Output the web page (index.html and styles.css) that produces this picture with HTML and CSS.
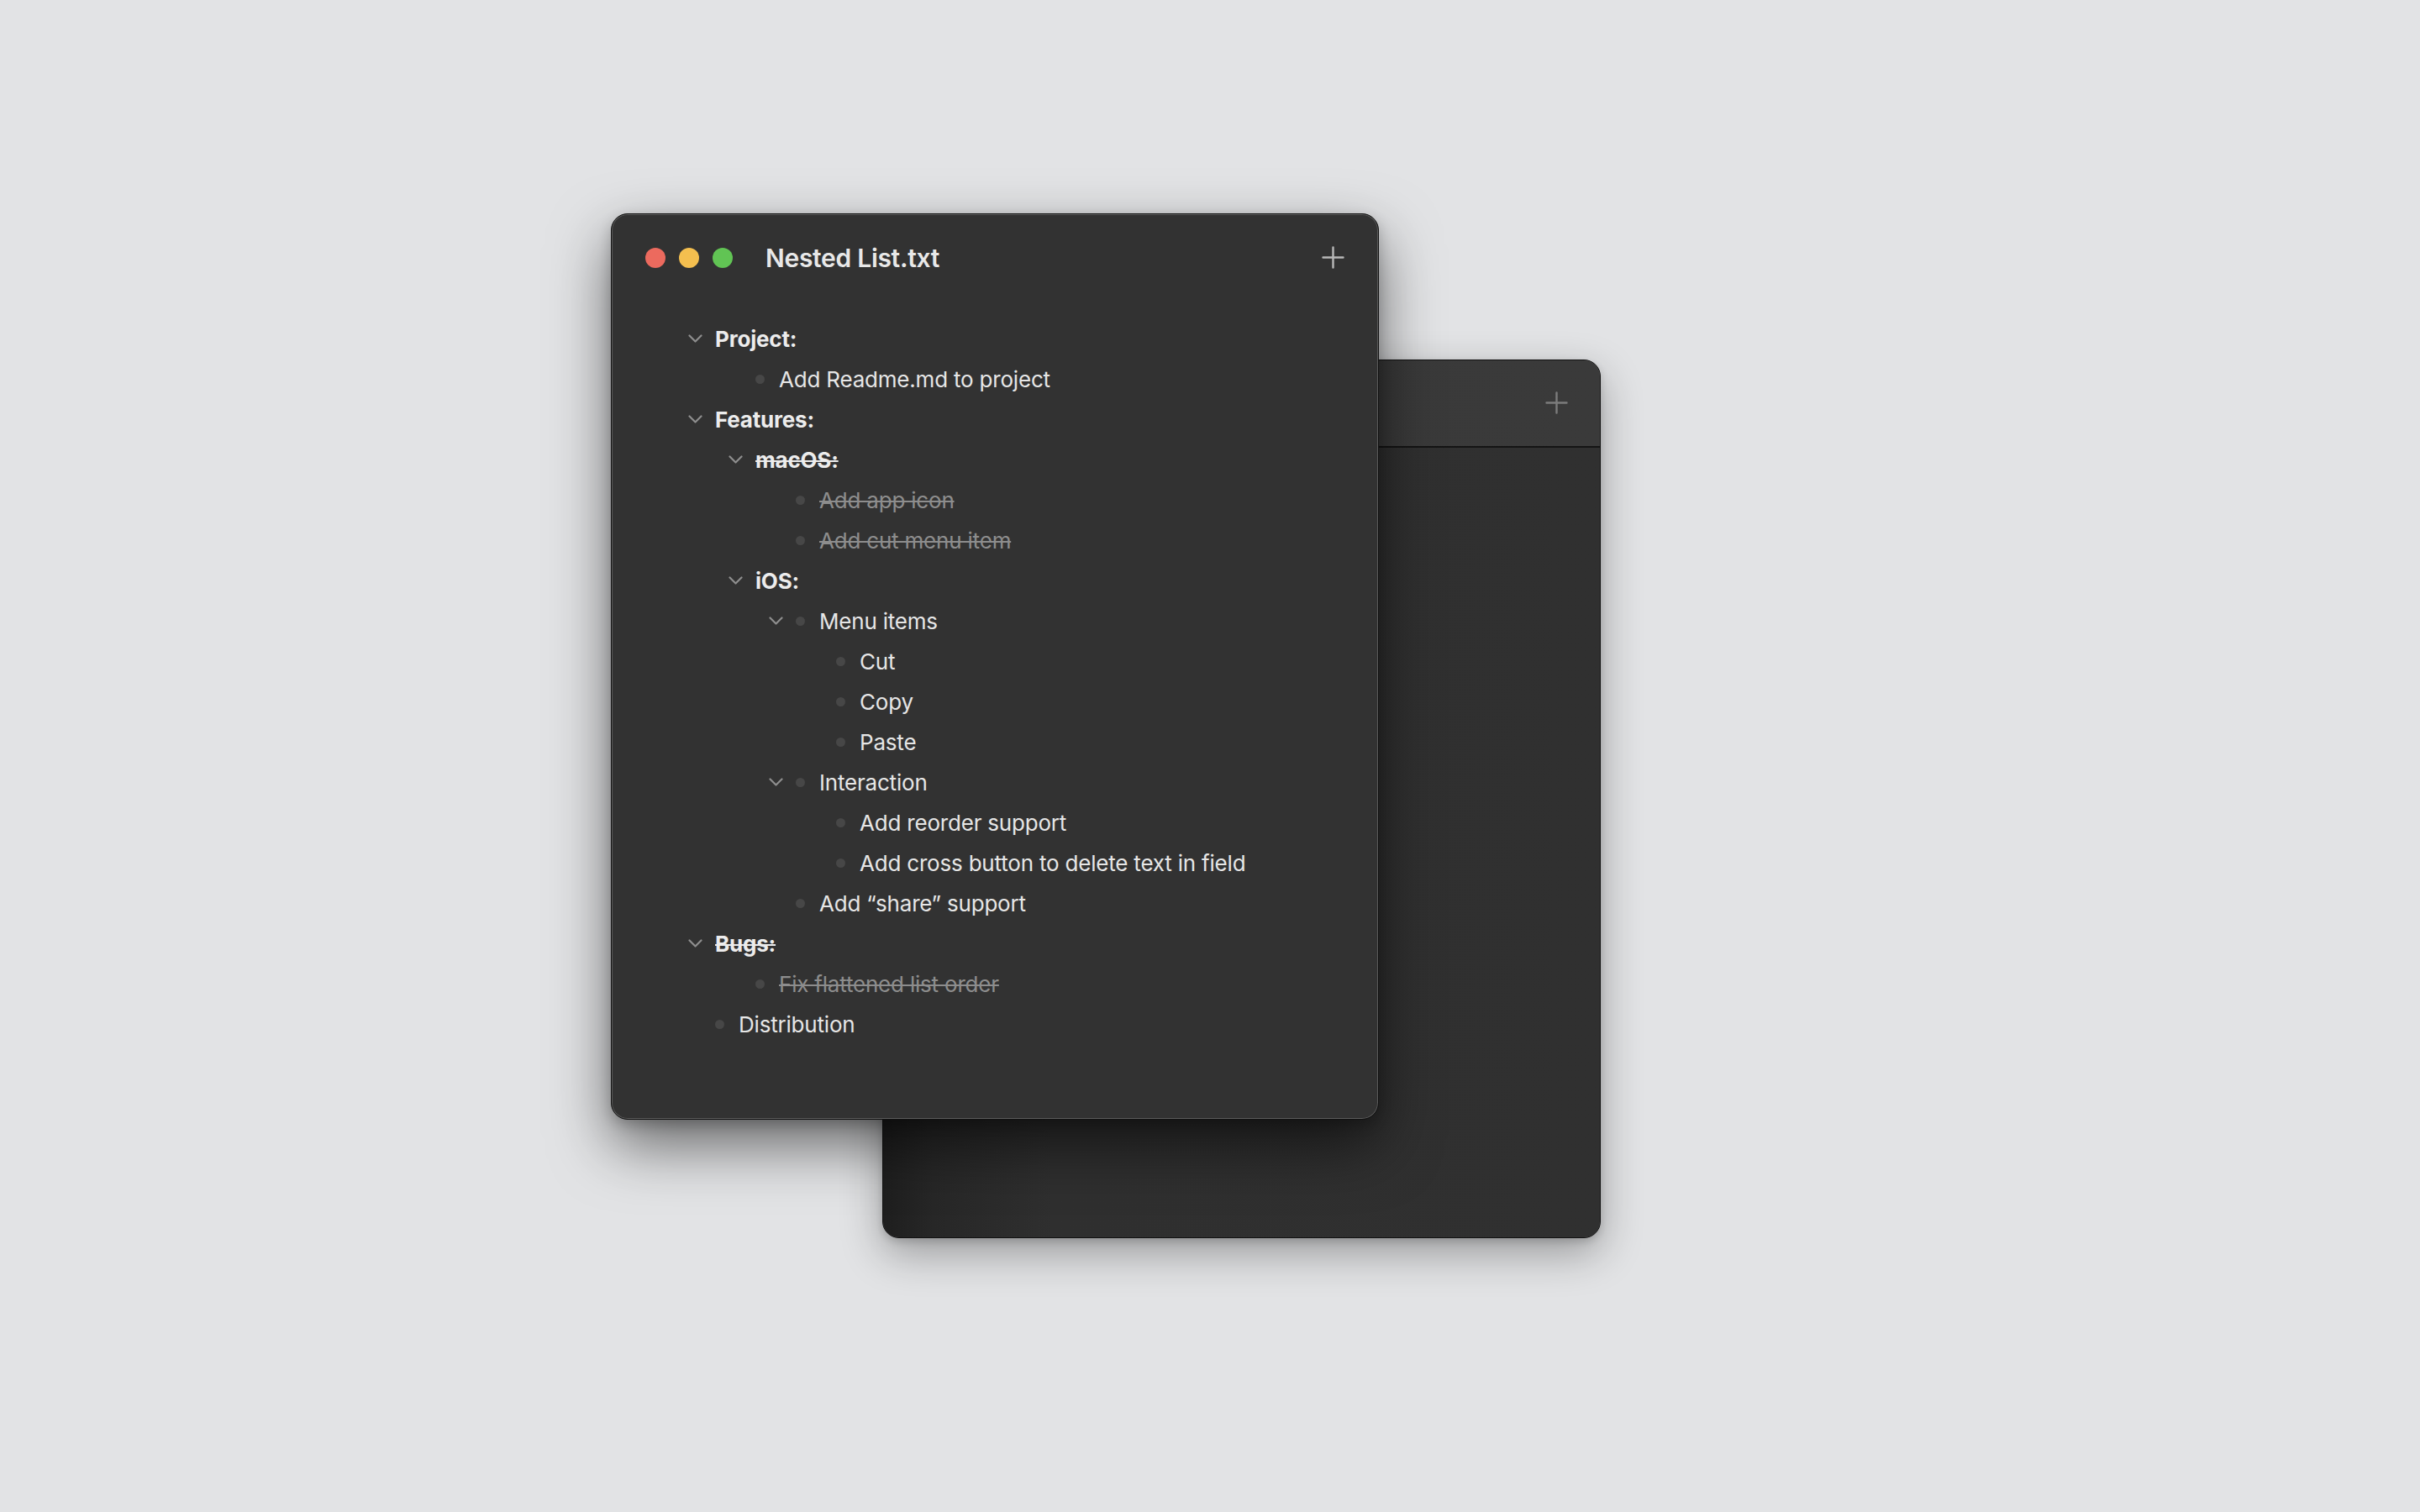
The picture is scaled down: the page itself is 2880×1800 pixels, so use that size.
FILE: index.html
```html
<!DOCTYPE html>
<html lang="en">
<head>
<meta charset="utf-8">
<title>Nested List.txt</title>
<link rel="stylesheet" href="styles.css">
</head>
<body>
<div class="desktop">
  <div class="window back">
    <div class="titlebar back-bar">
      <svg class="plus plus-dim" viewBox="0 0 27 27"><path d="M13.5 1.5v24M1.5 13.5h24"/></svg>
    </div>
    <div class="back-content"></div>
  </div>

  <div class="window front">
    <div class="titlebar">
      <div class="lights">
        <span class="light red"></span>
        <span class="light yellow"></span>
        <span class="light green"></span>
      </div>
      <div class="title">Nested List.txt</div>
      <svg class="plus" viewBox="0 0 27 27"><path d="M13.5 1.5v24M1.5 13.5h24"/></svg>
    </div>

    <ul class="outline">
      <li class="row l0"><span class="toggle"><svg viewBox="0 0 17 10"><path d="M1.5 1.5L8.5 8.5L15.5 1.5"/></svg></span><span class="text heading">Project:</span></li>
      <li class="row l1"><span class="toggle"></span><span class="bullet"></span><span class="text">Add Readme.md to project</span></li>
      <li class="row l0"><span class="toggle"><svg viewBox="0 0 17 10"><path d="M1.5 1.5L8.5 8.5L15.5 1.5"/></svg></span><span class="text heading">Features:</span></li>
      <li class="row l1"><span class="toggle"><svg viewBox="0 0 17 10"><path d="M1.5 1.5L8.5 8.5L15.5 1.5"/></svg></span><span class="text heading done-heading">macOS:</span></li>
      <li class="row l2"><span class="toggle"></span><span class="bullet"></span><span class="text done">Add app icon</span></li>
      <li class="row l2"><span class="toggle"></span><span class="bullet"></span><span class="text done">Add cut menu item</span></li>
      <li class="row l1"><span class="toggle"><svg viewBox="0 0 17 10"><path d="M1.5 1.5L8.5 8.5L15.5 1.5"/></svg></span><span class="text heading">iOS:</span></li>
      <li class="row l2"><span class="toggle"><svg viewBox="0 0 17 10"><path d="M1.5 1.5L8.5 8.5L15.5 1.5"/></svg></span><span class="bullet"></span><span class="text">Menu items</span></li>
      <li class="row l3"><span class="toggle"></span><span class="bullet"></span><span class="text">Cut</span></li>
      <li class="row l3"><span class="toggle"></span><span class="bullet"></span><span class="text">Copy</span></li>
      <li class="row l3"><span class="toggle"></span><span class="bullet"></span><span class="text">Paste</span></li>
      <li class="row l2"><span class="toggle"><svg viewBox="0 0 17 10"><path d="M1.5 1.5L8.5 8.5L15.5 1.5"/></svg></span><span class="bullet"></span><span class="text">Interaction</span></li>
      <li class="row l3"><span class="toggle"></span><span class="bullet"></span><span class="text">Add reorder support</span></li>
      <li class="row l3"><span class="toggle"></span><span class="bullet"></span><span class="text">Add cross button to delete text in field</span></li>
      <li class="row l2"><span class="toggle"></span><span class="bullet"></span><span class="text">Add “share” support</span></li>
      <li class="row l0"><span class="toggle"><svg viewBox="0 0 17 10"><path d="M1.5 1.5L8.5 8.5L15.5 1.5"/></svg></span><span class="text heading done-heading">Bugs:</span></li>
      <li class="row l1"><span class="toggle"></span><span class="bullet"></span><span class="text done">Fix flattened list order</span></li>
      <li class="row l0"><span class="toggle"></span><span class="bullet"></span><span class="text">Distribution</span></li>
    </ul>
  </div>
</div>
</body>
</html>
```

FILE: styles.css
```css
html, body {
  margin: 0;
  padding: 0;
}

body {
  width: 2880px;
  height: 1800px;
  background: #e2e3e5;
  font-family: Inter, "Noto Sans", "Liberation Sans", sans-serif;
  overflow: hidden;
}

.desktop {
  position: relative;
  width: 2880px;
  height: 1800px;
}

.window {
  position: absolute;
  box-sizing: border-box;
  border-radius: 20px;
  background: #323232;
  border: 1px solid #111;
  overflow: hidden;
}

.back {
  left: 1050px;
  top: 428px;
  width: 855px;
  height: 1046px;
  display: flex;
  flex-direction: column;
  background: #303030;
  box-shadow: inset 0 0 0 1px rgba(255, 255, 255, 0.18), 0 18px 50px rgba(0, 0, 0, 0.32), 0 4px 10px rgba(0, 0, 0, 0.15);
}

.front {
  left: 727px;
  top: 254px;
  width: 914px;
  height: 1079px;
  display: flex;
  flex-direction: column;
  box-shadow: inset 0 0 0 1px rgba(255, 255, 255, 0.2), 0 30px 70px rgba(0, 0, 0, 0.55), 0 6px 16px rgba(0, 0, 0, 0.2);
}

.titlebar {
  height: 103px;
  flex: none;
  display: flex;
  align-items: center;
  padding: 0 40px 0 40px;
}

.back-bar {
  height: 104px;
  justify-content: flex-end;
  padding-right: 38px;
  padding-bottom: 2px;
  box-sizing: border-box;
  background: linear-gradient(90deg, #1f1f1f 0px, #2d2d2d 60px, #393939 220px, #3a3a3a 100%);
  border-bottom: 2px solid #141414;
}

.back-content {
  flex: 1;
  background: linear-gradient(90deg, #1e1e1e 0px, #272727 60px, #2f2f2f 200px, #303030 100%);
}

.lights {
  display: flex;
  gap: 16px;
}

.light {
  width: 24px;
  height: 24px;
  border-radius: 50%;
  display: block;
}

.red { background: #ec6a5e; }
.yellow { background: #f4bf4f; }
.green { background: #61c454; }

.title {
  margin-left: 39px;
  font-size: 30px;
  font-weight: 600;
  color: #e8e8e8;
  letter-spacing: -0.3px;
  flex: 1;
}

.plus {
  width: 27px;
  height: 27px;
  fill: none;
  stroke: #b8b8b8;
  stroke-width: 2.4;
  stroke-linecap: round;
}

.plus-dim {
  stroke: #7c7c7c;
}

.outline {
  list-style: none;
  margin: 0;
  padding: 21px 0 0 0;
}

.row {
  display: flex;
  align-items: center;
  height: 48px;
  font-size: 26px;
  color: #e6e6e6;
  letter-spacing: -0.2px;
}

.l0 { padding-left: 91px; }
.l1 { padding-left: 139px; }
.l2 { padding-left: 187px; }
.l3 { padding-left: 235px; }

.toggle {
  width: 32px;
  flex: none;
  display: flex;
  align-items: center;
}

.toggle svg {
  width: 17px;
  height: 10px;
  fill: none;
  stroke: #8e8e8e;
  stroke-width: 2.2;
  stroke-linecap: round;
  stroke-linejoin: round;
}

.bullet {
  width: 11px;
  height: 11px;
  border-radius: 50%;
  background: #474747;
  margin-right: 17px;
  flex: none;
}

.text {
  white-space: nowrap;
}

.heading {
  font-weight: 700;
  color: #ececec;
}

.done {
  color: #8d8d8d;
  text-decoration: line-through;
  text-decoration-thickness: 2px;
}

.done-heading {
  text-decoration: line-through;
  text-decoration-thickness: 2px;
}
```
